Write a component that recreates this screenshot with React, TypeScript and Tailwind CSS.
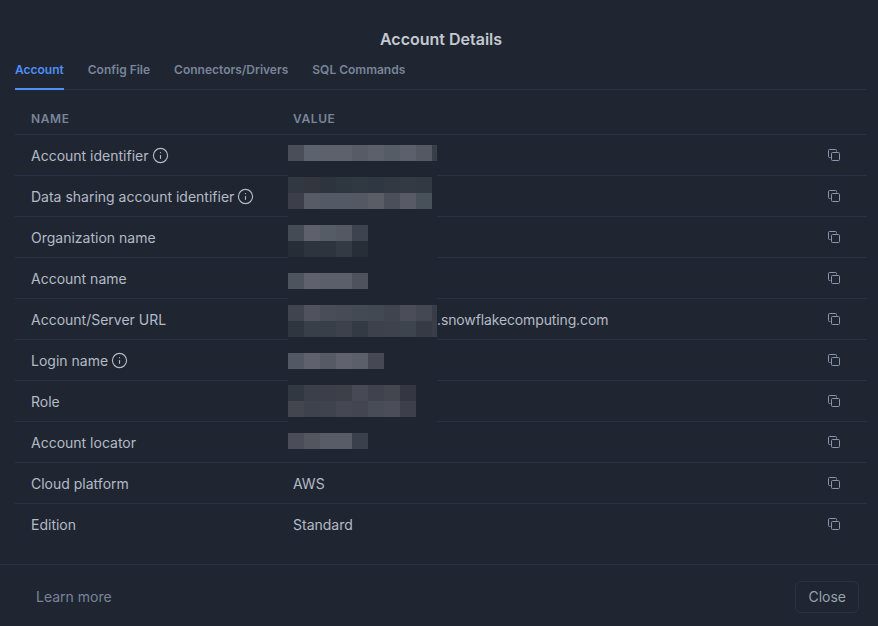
import { Info } from "lucide-react";

const rows = [
  { name: "Account identifier", info: true },
  { name: "Data sharing account identifier", info: true },
  { name: "Organization name" },
  { name: "Account name" },
  { name: "Account/Server URL", value: ".snowflakecomputing.com", indent: true },
  { name: "Login name", info: true },
  { name: "Role" },
  { name: "Account locator" },
  { name: "Cloud platform", value: "AWS" },
  { name: "Edition", value: "Standard" },
];

// one entry per 16px tile of the blurred-out values
const mosaic = [
  { top: "top-[0px]", cells: ["bg-[#4a4e58]", "bg-[#5c626e]", "bg-[#5c616c]", "bg-[#5c616c]", "bg-[#565b66]", "bg-[#5c606b]", "bg-[#555c66]", "bg-[#5c606c]", "bg-[#545862]", "bg-[#3a3e48]"] },
  { top: "top-[32px]", cells: ["bg-[#313842]", "bg-[#33363f]", "bg-[#2d343e]", "bg-[#2e3640]", "bg-[#303842]", "bg-[#2f3742]", "bg-[#323943]", "bg-[#333a44]", "bg-[#323943]"] },
  { top: "top-[48px]", cells: ["bg-[#3c3f49]", "bg-[#575b66]", "bg-[#535a66]", "bg-[#535a66]", "bg-[#545862]", "bg-[#5a5c66]", "bg-[#4b4f59]", "bg-[#585b66]", "bg-[#48505a]"] },
  { top: "top-[80px]", cells: ["bg-[#444b55]", "bg-[#5e616b]", "bg-[#555c66]", "bg-[#535862]", "bg-[#3e444f]"] },
  { top: "top-[96px]", cells: ["bg-[#272d37]", "bg-[#2d343e]", "bg-[#2d343e]", "bg-[#343a44]", "bg-[#272e38]"] },
  { top: "top-[128px]", cells: ["bg-[#4e545e]", "bg-[#5f626c]", "bg-[#5b5f69]", "bg-[#5b5f69]", "bg-[#4e525d]"] },
  { top: "top-[160px]", cells: ["bg-[#40444e]", "bg-[#50535d]", "bg-[#494d57]", "bg-[#464b55]", "bg-[#434a54]", "bg-[#434952]", "bg-[#40444e]", "bg-[#4b4e58]", "bg-[#434852]", "bg-[#393d47]"] },
  { top: "top-[176px]", cells: ["bg-[#2f363f]", "bg-[#383f49]", "bg-[#383f49]", "bg-[#3d414b]", "bg-[#343a44]", "bg-[#3d414b]", "bg-[#3d424c]", "bg-[#3e444e]", "bg-[#363a44]", "bg-[#3a3e48]"] },
  { top: "top-[208px]", cells: ["bg-[#535964]", "bg-[#5f626c]", "bg-[#565a64]", "bg-[#60636d]", "bg-[#5a5f6a]", "bg-[#464953]"] },
  { top: "top-[240px]", cells: ["bg-[#323841]", "bg-[#3a3f49]", "bg-[#3c3f49]", "bg-[#3d3f49]", "bg-[#474a54]", "bg-[#40434d]", "bg-[#44464f]", "bg-[#343641]"] },
  { top: "top-[256px]", cells: ["bg-[#43464f]", "bg-[#3d424c]", "bg-[#3f434d]", "bg-[#454852]", "bg-[#434650]", "bg-[#474c56]", "bg-[#4b4e58]", "bg-[#3d404a]"] },
  { top: "top-[288px]", cells: ["bg-[#4b4e58]", "bg-[#53565f]", "bg-[#575c66]", "bg-[#575c66]", "bg-[#3b414c]"] },
];

function CopyIcon() {
  return (
    <svg width="12" height="12" viewBox="0 0 12 12" fill="none" stroke="currentColor" className="mr-[27px] shrink-0 text-[#8a96ab]">
      <rect x="3.5" y="3.5" width="8" height="8" rx="1" />
      <path d="M2.5 8.5h-1a1 1 0 0 1-1-1v-6a1 1 0 0 1 1-1h6a1 1 0 0 1 1 1v1" />
    </svg>
  );
}

export default function App() {
  return (
    <div className="flex h-[626px] w-[878px] flex-col overflow-hidden bg-[#1f2631] font-['Inter',sans-serif]">
      <h2 className="pt-[29px] pl-1 text-center text-base leading-5 font-semibold text-[#c4c9d1]">Account Details</h2>

      <div className="mt-[4px] mr-[11px] ml-[15px] flex h-[37px] gap-6 border-b border-[#2b3145] text-xs font-semibold">
        <div className="h-[37px] border-b-2 border-[#4f8ff7] pt-[9px] text-[#4f8ff7]">Account</div>
        <div className="pt-[9px] text-[#79849a]">Config File</div>
        <div className="pt-[9px] text-[#79849a]">Connectors/Drivers</div>
        <div className="pt-[9px] text-[#79849a]">SQL Commands</div>
      </div>

      <div className="relative mr-[11px] ml-[15px] flex-1">
        <div className="flex h-[45px] items-end border-b border-[#2b3145] pb-[7px] text-xs font-semibold tracking-wider text-[#79849a]">
          <div className="w-[278px] pl-4">NAME</div>
          <div>VALUE</div>
        </div>
        <div>
          {rows.map((row) => (
            <div key={row.name} className="flex h-[41px] items-center border-b border-[#2b3145] text-sm text-[#b4bac6] last:border-transparent">
              <div className="flex w-[278px] items-center gap-[3px] pl-4">
                <span className="pt-[2px]">{row.name}</span>
                {row.info ? <Info size={17} strokeWidth={1.6} /> : null}
              </div>
              <div className={row.indent ? "flex-1 pt-[2px] pl-[144px] tracking-[-0.13px]" : "flex-1 pt-[2px]"}>{row.value}</div>
              <CopyIcon />
            </div>
          ))}
        </div>

        <div className="absolute top-[55px] left-[273px] h-[310px] w-[149px] bg-[#1f2631]">
          {mosaic.map((line) => (
            <div key={line.top} className={`absolute left-0 flex ${line.top}`}>
              {line.cells.map((cell, i) => (
                <div key={i} className={`h-4 shrink-0 ${i === 9 ? "w-[5px]" : "w-4"} ${cell}`} />
              ))}
            </div>
          ))}
        </div>
      </div>

      <div className="flex h-[62px] items-center justify-between border-t border-[#2b3145] pt-[2px] pr-[19px] pl-9 text-sm">
        <span className="text-[#79849a]">Learn more</span>
        <button type="button" className="h-8 rounded-md border border-[#2b3145] px-3 text-[#98a1b0]">Close</button>
      </div>
    </div>
  );
}
